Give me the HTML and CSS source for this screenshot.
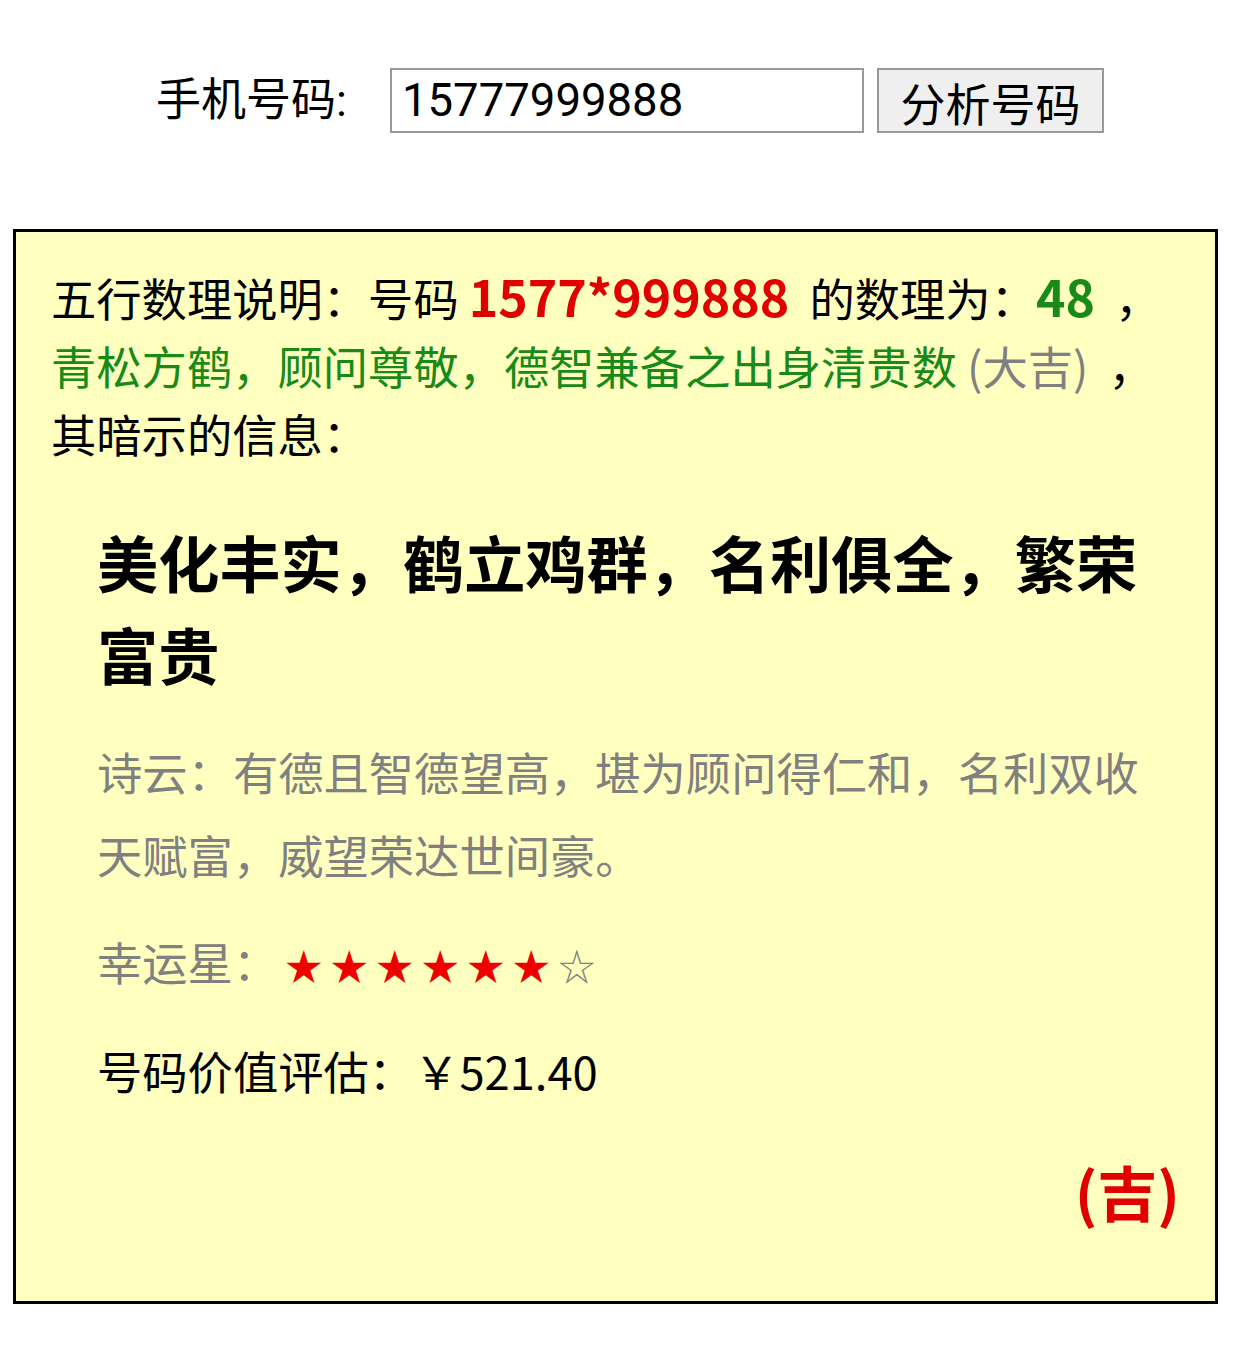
FILE: index.html
```html
<!DOCTYPE html>
<html lang="zh-CN">
<head>
<meta charset="utf-8">
<title>手机号码测吉凶</title>
<link rel="stylesheet" href="styles.css">
</head>
<body>
<form class="query">
  <label class="query-label" for="phone">手机号码:</label>
  <input class="query-input" id="phone" type="text" value="15777999888">
  <button class="query-btn" type="button">分析号码</button>
</form>

<section class="result">
  <p class="intro">五行数理说明：号码 <b class="num-red">1577*999888</b>&nbsp; 的数理为：<b class="num-green">48</b> &nbsp;，<br><span class="green">青松方鹤，顾问尊敬，德智兼备之出身清贵数</span> <span class="gray">(大吉)</span>&nbsp; ，<br>其暗示的信息：</p>
  <div class="detail">
    <h2 class="omen">美化丰实，鹤立鸡群，名利俱全，繁荣富贵</h2>
    <p class="poem">诗云：有德且智德望高，堪为顾问得仁和，名利双收天赋富，威望荣达世间豪。</p>
    <p class="stars"><span class="gray">幸运星：</span><span class="star-on">★★★★★★</span><span class="star-off">☆</span></p>
    <p class="value">号码价值评估：￥521.40</p>
  </div>
  <p class="verdict">(吉)</p>
</section>
</body>
</html>
```

FILE: styles.css
```css
* { box-sizing: border-box; }

body {
  margin: 0;
  background: #ffffff;
  color: #000;
  font-family: "Noto Sans CJK SC", "Noto Sans", sans-serif;
  font-size: 45.3px;
}

.query {
  display: flex;
  justify-content: center;
  align-items: flex-start;
  padding-top: 68px;
  height: 229px;
}

.query-label {
  font-family: Roboto, "Noto Sans CJK SC", sans-serif;
  font-size: 45px;
  line-height: 65px;
  margin-right: 43px;
}

.query-input {
  width: 474px;
  height: 65px;
  border: 2px solid #999;
  padding: 0 10px;
  font-family: Roboto, "Noto Sans CJK SC", sans-serif;
  font-size: 45.5px;
  color: #000;
  background: #fff;
  outline: none;
}

.query-btn {
  margin-left: 13px;
  width: 227px;
  height: 65px;
  border: 2px solid #999;
  background: #efefef;
  font-family: "Noto Sans CJK SC", sans-serif;
  font-size: 45px;
  color: #000;
  padding: 0;
}

.result {
  margin-left: 13px;
  width: 1205px;
  border: 3px solid #000;
  background: #ffffc0;
  padding: 31px 35px 65px 35px;
}

.intro {
  margin: 0;
  line-height: 68px;
}

.num-red {
  color: #e00000;
  font-size: 50px;
  line-height: 1;
}

.num-green {
  color: #178a17;
  font-size: 50px;
  line-height: 1;
}

.green { color: #178a17; }
.gray { color: #808080; }

.detail {
  padding-left: 46px;
  padding-right: 20px;
}

.omen {
  margin: 49px 0 30px;
  font-size: 61.2px;
  font-weight: 700;
  line-height: 92px;
}

.poem {
  margin: 0;
  color: #808080;
  line-height: 83px;
}

.stars {
  margin: 31px 0 0;
  line-height: 68px;
}

.star-on,
.star-off {
  font-size: 37px;
  letter-spacing: 8.5px;
}

.star-on {
  color: #ee0000;
  margin-left: 7px;
}

.star-off { color: #808080; }

.value {
  margin: 37px 0 0;
  line-height: 68px;
}

.verdict {
  margin: 42px 0 0;
  text-align: right;
  color: #e00000;
  font-size: 60px;
  font-weight: 700;
  line-height: 90px;
}
```
